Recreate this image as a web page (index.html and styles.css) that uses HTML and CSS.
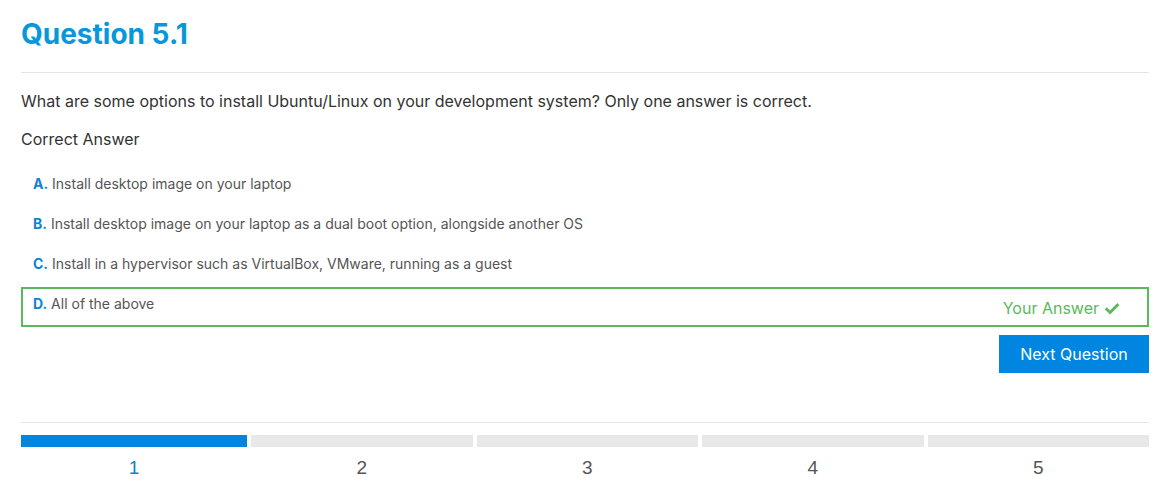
FILE: index.html
```html
<!DOCTYPE html>
<html lang="en">
<head>
<meta charset="utf-8">
<title>Question 5.1</title>
<link rel="stylesheet" href="styles.css">
</head>
<body>
<main class="quiz">
  <h1 class="quiz-title">Question 5.1</h1>
  <hr class="rule">
  <p class="question">What are some options to install Ubuntu/Linux on your development system? Only one answer is correct.</p>
  <p class="label">Correct Answer</p>
  <ul class="options">
    <li class="option"><span class="option-text"><b class="letter">A.</b> Install desktop image on your laptop</span></li>
    <li class="option"><span class="option-text"><b class="letter">B.</b> Install desktop image on your laptop as a dual boot option, alongside another OS</span></li>
    <li class="option"><span class="option-text"><b class="letter">C.</b> Install in a hypervisor such as VirtualBox, VMware, running as a guest</span></li>
    <li class="option option-selected"><span class="option-text"><b class="letter">D.</b> All of the above</span>
      <span class="your-answer">Your Answer
        <svg class="check" viewBox="0 0 16 16" width="16" height="16" aria-hidden="true"><path d="M1.8 8.3 L6 12.5 L14.4 4.1" fill="none" stroke="currentColor" stroke-width="2.9" stroke-linecap="butt" stroke-linejoin="miter"/></svg>
      </span>
    </li>
  </ul>
  <div class="actions">
    <button class="next-btn" type="button">Next Question</button>
  </div>
  <hr class="rule rule-bottom">
  <ol class="progress">
    <li class="step step-active"><span class="bar"></span><span class="num">1</span></li>
    <li class="step"><span class="bar"></span><span class="num">2</span></li>
    <li class="step"><span class="bar"></span><span class="num">3</span></li>
    <li class="step"><span class="bar"></span><span class="num">4</span></li>
    <li class="step"><span class="bar"></span><span class="num">5</span></li>
  </ol>
</main>
</body>
</html>
```
FILE: styles.css
```css
* { box-sizing: border-box; }
html, body { margin: 0; padding: 0; background: #fff; }
body {
  font-family: Inter, "Noto Sans", sans-serif;
  color: #333;
}
.quiz {
  padding: 16px 20px 0 21px;
}
.quiz-title {
  margin: 0;
  font-size: 28px;
  line-height: 36px;
  font-weight: 700;
  color: #0798dc;
}
.rule {
  border: 0;
  border-top: 1px solid #e5e5e5;
  margin: 20px 0 0;
  height: 0;
}
.question {
  margin: 18px 0 0;
  font-size: 16px;
  line-height: 20px;
}
.label {
  margin: 18px 0 0;
  font-size: 16px;
  line-height: 20px;
}
.options {
  list-style: none;
  margin: 18px 0 0;
  padding: 0;
}
.option {
  display: flex;
  justify-content: space-between;
  align-items: flex-start;
  min-height: 40px;
  padding: 5px 10px;
  border: 2px solid transparent;
  font-size: 14px;
  line-height: 20px;
  color: #555;
}
.letter {
  color: #0a84d6;
  font-weight: 700;
}
.option-selected {
  border-color: #5cb85c;
}
.your-answer {
  display: flex;
  align-items: center;
  gap: 5px;
  margin: 2px 17px 0 0;
  font-size: 16px;
  line-height: 24px;
  color: #5cb85c;
}
.check { display: block; }
.actions {
  display: flex;
  justify-content: flex-end;
  margin-top: 8px;
}
.next-btn {
  width: 150px;
  height: 38px;
  border: 0;
  border-radius: 0;
  background: #0085e0;
  color: #fff;
  font-family: inherit;
  font-size: 16px;
}
.rule-bottom {
  margin-top: 49px;
}
.progress {
  list-style: none;
  margin: 12px 0 0;
  padding: 0;
  display: grid;
  grid-template-columns: 226px repeat(4, 1fr);
  gap: 4px;
}
.step {
  display: flex;
  flex-direction: column;
  align-items: center;
}
.bar {
  display: block;
  width: 100%;
  height: 12px;
  background: #e8e8e8;
}
.step-active .bar { background: #0085e0; }
.num {
  margin-top: 9px;
  font-family: "Liberation Sans", Arial, sans-serif;
  font-size: 19px;
  line-height: 24px;
  color: #555;
}
.step-active .num { color: #0a84d6; }
```
